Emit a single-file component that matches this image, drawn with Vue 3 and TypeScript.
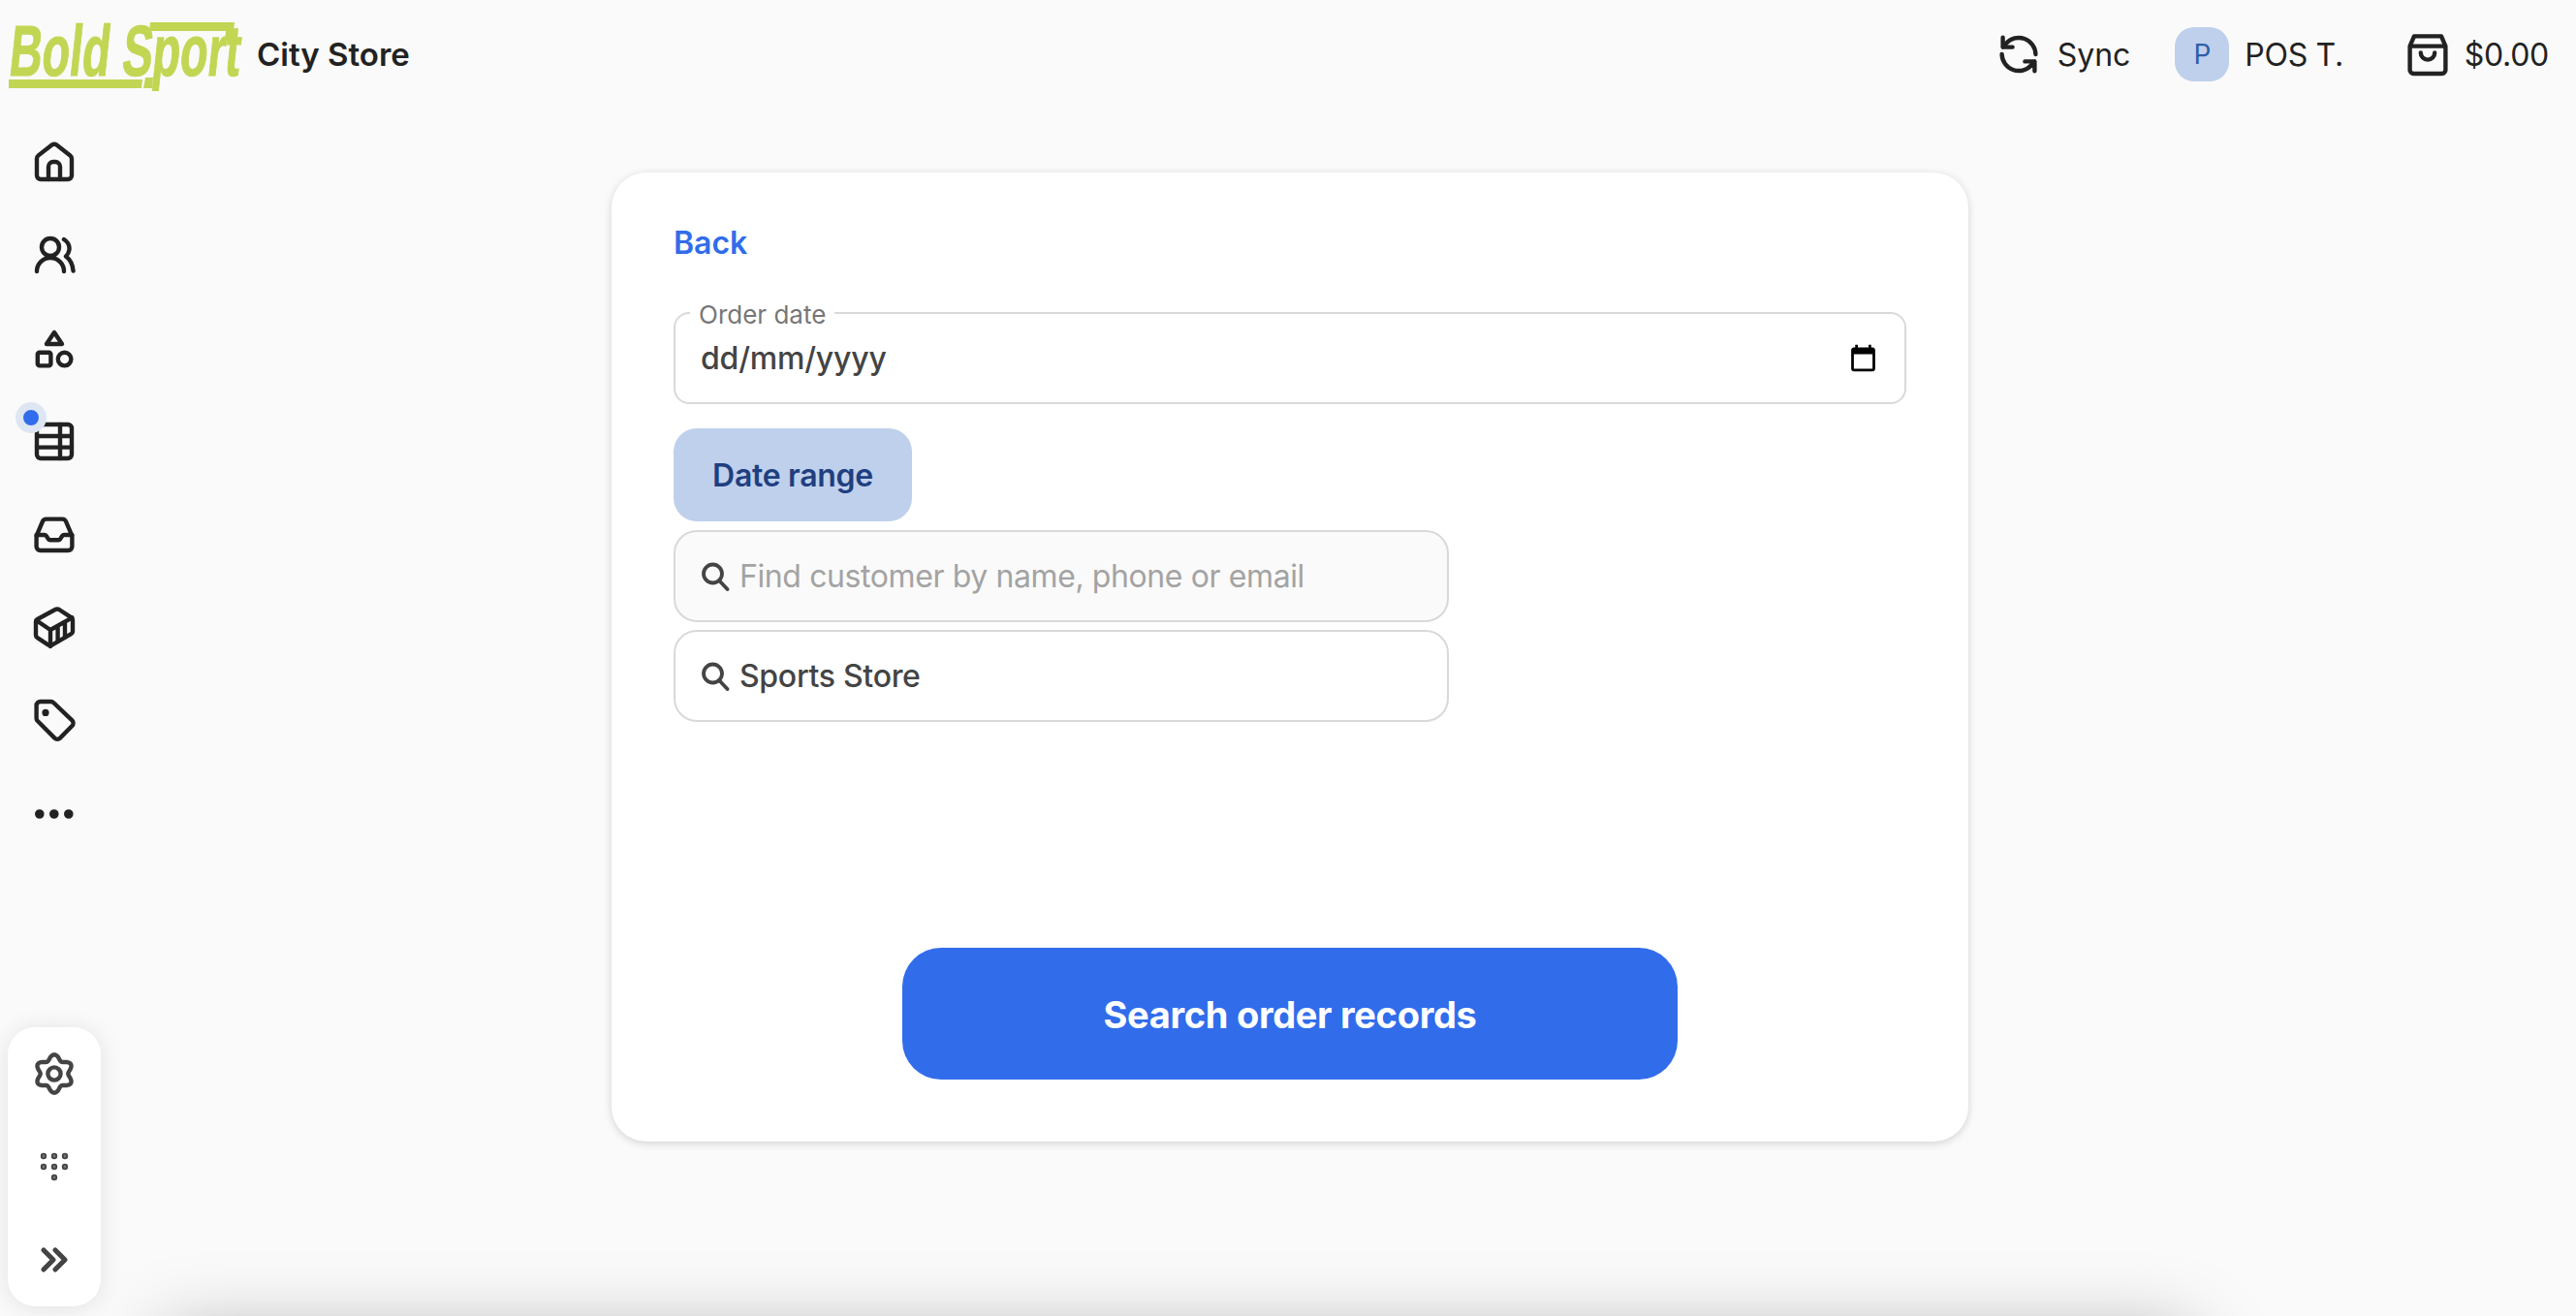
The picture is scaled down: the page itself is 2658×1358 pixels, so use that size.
<template>
  <div class="page">
    <header class="topbar">
      <div class="brand">
        <svg class="logo" viewBox="0 -10 248 92" width="248" height="92" aria-label="Bold Sport">
          <text class="logo-text" x="0" y="58" transform="translate(14 0) skewX(-6) scale(0.63 1)">Bold Sport</text>
          <path class="logo-bar" d="M155 3H242L241 12H154ZM233 12h8l-1 10h-8ZM9 62H147L146 71H9ZM150 60H158L157 71H148Z" />
        </svg>
        <span class="store-name">City Store</span>
      </div>
      <div class="actions">
        <button class="action sync" type="button">
          <svg class="icon" viewBox="0 0 24 24"><path d="M20.7 12a8.7 8.7 0 0 0-15.2-5.6L3.800 8.300M3.800 3.400v4.900h5M3.300 12a8.700 8.700 0 0 0 15.200 5.600l1.700-1.900M20.200 20.600v-4.900h-5" /></svg>
          <span>Sync</span>
        </button>
        <button class="action user" type="button">
          <span class="avatar">P</span>
          <span class="user-name">POS T.</span>
        </button>
        <button class="action cart" type="button">
          <svg class="icon" viewBox="0 0 24 24"><path d="M2.800 7.800 5 2.700h14l2.200 5.100M2.800 7.800V20a1.900 1.900 0 0 0 1.900 2h14.600a1.900 1.900 0 0 0 1.900-2V7.800ZM8.400 11.200a3.600 3.600 0 0 0 7.200 0" /></svg>
          <span class="cart-total">$0.00</span>
        </button>
      </div>
    </header>

    <div class="body">
      <aside class="sidebar">
        <nav class="nav">
          <a v-for="item in navItems" :key="item.name" class="nav-item" :title="item.name">
            <span v-if="item.badge" class="nav-badge"></span>
            <svg class="icon" viewBox="0 0 24 24" v-html="item.icon"></svg>
          </a>
        </nav>
        <div class="tools">
          <a v-for="item in toolItems" :key="item.name" class="nav-item" :title="item.name">
            <svg class="icon" viewBox="0 0 24 24" v-html="item.icon"></svg>
          </a>
        </div>
      </aside>

      <main class="main">
        <section class="card">
          <a class="back">Back</a>

          <div class="date-field">
            <span class="date-label">Order date</span>
            <span class="date-value">dd/mm/yyyy</span>
            <svg class="calendar" viewBox="0 0 24 24"><path d="M19 4h-1V2h-2v2H8V2H6v2H5c-1.100 0-2 .9-2 2v14c0 1.100.9 2 2 2h14c1.100 0 2-.9 2-2V6c0-1.100-.9-2-2-2zm0 16H5V9h14v11z" /></svg>
          </div>

          <button class="range-btn" type="button">Date range</button>

          <label class="search search--muted">
            <svg class="search-icon" viewBox="0 0 30 30"><circle cx="12.500" cy="12" r="9.500" /><path d="m19.500 19.500 8 8.500" /></svg>
            <input type="text" placeholder="Find customer by name, phone or email" />
          </label>
          <label class="search">
            <svg class="search-icon" viewBox="0 0 30 30"><circle cx="12.500" cy="12" r="9.500" /><path d="m19.500 19.500 8 8.500" /></svg>
            <input type="text" value="Sports Store" />
          </label>

          <button class="submit" type="button">Search order records</button>
        </section>
      </main>
    </div>

    <div class="bottom-sheet"></div>
  </div>
</template>

<script setup lang="ts">
// gear outline, six rounded lobes with one pointing straight up
function gearPath(): string {
  const pts: string[] = [];
  for (let i = 0; i < 120; i++) {
    const a = (i / 120) * Math.PI * 2;
    const r = 8.5 + 1.35 * Math.cos(6 * a);
    const x = 12 + r * Math.sin(a);
    const y = 12 - r * Math.cos(a);
    pts.push(`${x.toFixed(2)} ${y.toFixed(2)}`);
  }
  return `M${pts.join("L")}Z`;
}

const navItems = [
  {
    name: "Home",
    icon: '<path d="M3 10.400c0-.7.3-1.300.8-1.700l7-5.400a2 2 0 0 1 2.400 0l7 5.400c.5.4.8 1 .8 1.700V19a2 2 0 0 1-2 2H5a2 2 0 0 1-2-2Z"/><path d="M9 21v-6.500a2.500 2.500 0 0 1 2.500-2.500h1a2.500 2.500 0 0 1 2.500 2.500V21"/>',
  },
  {
    name: "Customers",
    icon: '<circle cx="10" cy="8" r="4.500"/><path d="M3 20.500a7 7 0 0 1 14 0M17 4c2 1.300 3 3.300 2.700 5.500-.2 1.300-.9 2.500-1.700 3.300 2 1.500 3.500 4.300 3.800 7.500"/>',
  },
  {
    name: "Products",
    icon: '<path d="M12 4 16 10H8Z"/><rect x="3.400" y="14.400" width="6.800" height="6.800" rx="1"/><circle cx="17.300" cy="17.800" r="3.400"/>',
  },
  {
    name: "Orders",
    badge: true,
    icon: '<rect x="3" y="3.500" width="18" height="17.500" rx="2"/><path d="M3 9.500h18M3 15.300h18M15 3.500V21"/>',
  },
  {
    name: "Inbox",
    icon: '<path d="M2.800 13v5.500a2 2 0 0 0 2 2h14.400a2 2 0 0 0 2-2V13L18 5.500a2 2 0 0 0-1.800-1.200H7.800A2 2 0 0 0 6 5.500Z"/><path d="M2.800 12.500H7a1 1 0 0 1 .8.4l1.200 1.800a1 1 0 0 0 .8.4h4.400a1 1 0 0 0 .8-.4l1.200-1.800a1 1 0 0 1 .8-.4h4.200"/>',
  },
  {
    name: "Inventory",
    icon: '<path d="M12.500 3 3.300 8a1.500 1.500 0 0 0-.8 1.300v6.900c0 .6.300 1.100.8 1.400l5.700 3.700c.6.300 1.200.3 1.800 0l9.900-5.700c.5-.3.800-.8.800-1.400V8.500c0-.6-.3-1.100-.8-1.400L14.500 3a2 2 0 0 0-2 0Z"/><path d="M2.800 8.600 10 13.500 21.200 7.200M10 13.500V22M13.800 11.500v8M17.500 9.300v8"/>',
  },
  {
    name: "Promotions",
    icon: '<path d="M2.800 4.500a2 2 0 0 1 2-2h5.500c.5 0 1 .2 1.400.6l9.500 9.100a2 2 0 0 1 0 2.800L15 21.300a2 2 0 0 1-2.800 0l-8.800-8.800a2 2 0 0 1-.6-1.400Z"/><circle class="solid" cx="7.500" cy="8.200" r=".7"/>',
  },
  {
    name: "More",
    icon: '<circle class="solid" cx="4.400" cy="12.500" r="1.300"/><circle class="solid" cx="11.900" cy="12.500" r="1.300"/><circle class="solid" cx="19.400" cy="12.500" r="1.300"/>',
  },
];

const toolItems = [
  {
    name: "Settings",
    icon: `<path d="${gearPath()}"/><circle cx="12" cy="12" r="3.300"/>`,
  },
  {
    name: "Keypad",
    icon: '<circle class="solid" cx="6.500" cy="6.500" r=".5"/><circle class="solid" cx="12" cy="6.500" r=".5"/><circle class="solid" cx="17.500" cy="6.500" r=".5"/><circle class="solid" cx="6.500" cy="12" r=".5"/><circle class="solid" cx="12" cy="12" r=".5"/><circle class="solid" cx="17.500" cy="12" r=".5"/><circle class="solid" cx="12" cy="17.500" r=".5"/>',
  },
  {
    name: "Expand",
    icon: '<path stroke-width="2.600" d="m6.500 7 5 5-5 5M12.500 7l5 5-5 5"/>',
  },
];
</script>

<style>
html,
body {
  margin: 0;
  background: #fafafa;
}
</style>

<style scoped>
.page {
  position: relative;
  display: flex;
  flex-direction: column;
  height: 100vh;
  overflow: hidden;
  background: #fafafa;
  color: #222;
  font-family: Inter, "Liberation Sans", sans-serif;
}

.topbar {
  display: flex;
  align-items: center;
  justify-content: space-between;
  flex: none;
  height: 112px;
  padding-right: 28px;
}
.brand {
  display: flex;
  align-items: center;
}
.logo {
  flex: none;
  overflow: visible;
}
.logo-text {
  fill: #c2d654;
  stroke: #c2d654;
  stroke-width: 1.2px;
  font-family: "Liberation Sans", Arial, sans-serif;
  font-size: 74px;
  font-weight: 700;
}
.logo-bar {
  fill: #c2d654;
}
.store-name {
  margin-left: 17px;
  font-size: 33px;
  font-weight: 600;
}

.actions {
  display: flex;
  align-items: center;
}
.action {
  display: flex;
  align-items: center;
  padding: 0;
  border: 0;
  background: none;
  color: inherit;
  font: inherit;
  font-size: 32px;
}
.sync {
  gap: 16px;
  margin-right: 46px;
}
.user {
  gap: 16px;
  margin-right: 63px;
}
.cart {
  gap: 14px;
}
.user-name {
  letter-spacing: -0.3px;
}
.cart-total {
  letter-spacing: -0.3px;
}
.avatar {
  display: flex;
  align-items: center;
  justify-content: center;
  width: 56px;
  height: 56px;
  border-radius: 20px;
  background: #bfd0ec;
  color: #2f5da8;
  font-size: 28px;
}

.icon {
  display: block;
  flex: none;
  width: 48px;
  height: 48px;
  fill: none;
  stroke: currentColor;
  stroke-width: 2.2;
  stroke-linecap: round;
  stroke-linejoin: round;
}
.icon :deep(.solid) {
  fill: currentColor;
}

.body {
  display: flex;
  flex: 1;
  min-height: 0;
}
.sidebar {
  display: flex;
  flex-direction: column;
  justify-content: space-between;
  flex: none;
  box-sizing: border-box;
  width: 112px;
  padding: 7px 8px 10px;
}
.nav-item {
  position: relative;
  display: flex;
  align-items: center;
  justify-content: center;
  width: 96px;
  height: 96px;
}
.nav-badge {
  position: absolute;
  top: 8px;
  left: 8px;
  width: 16px;
  height: 16px;
  border: 8px solid #dfe6f3;
  border-radius: 50%;
  background: #316ceb;
}
.tools {
  overflow: hidden;
  border-radius: 28px;
  background: #fff;
  box-shadow: 0 2px 24px rgba(0, 0, 0, 0.1);
  color: #444;
}

.main {
  flex: 1;
  display: flex;
  justify-content: center;
  padding: 66px 108px 0 0;
}
.card {
  display: flex;
  flex-direction: column;
  align-items: flex-start;
  box-sizing: border-box;
  width: 1400px;
  height: 1000px;
  padding: 53px 64px 64px;
  border-radius: 36px;
  background: #fff;
  box-shadow: 0 2px 8px rgba(0, 0, 0, 0.16);
}
.back {
  margin-bottom: 51px;
  color: #316ceb;
  font-size: 32px;
  font-weight: 600;
  line-height: 40px;
}

.date-field {
  position: relative;
  display: flex;
  align-items: center;
  justify-content: space-between;
  box-sizing: border-box;
  width: 100%;
  height: 95px;
  padding: 0 26px;
  border: 2px solid #d9d9d9;
  border-radius: 16px;
  color: #444;
  font-size: 32px;
  font-weight: 500;
}
.date-value {
  letter-spacing: -0.2px;
}
.date-label {
  position: absolute;
  top: -15px;
  left: 15px;
  padding: 0 9px;
  background: #fff;
  color: #777;
  font-size: 26px;
  font-weight: 400;
  line-height: 32px;
}
.calendar {
  width: 33px;
  height: 33px;
  fill: #000;
}

.range-btn {
  width: 246px;
  height: 96px;
  margin: 25px 0 9px;
  padding: 0;
  border: 0;
  border-radius: 24px;
  background: #bfd0ec;
  color: #1f3f80;
  font: inherit;
  font-size: 32px;
  font-weight: 600;
  letter-spacing: -0.3px;
}

.search {
  display: flex;
  align-items: center;
  gap: 10px;
  box-sizing: border-box;
  width: 800px;
  height: 95px;
  margin-bottom: 8px;
  padding: 0 26px;
  border: 2px solid #d9d9d9;
  border-radius: 24px;
  color: #444;
}
.search--muted {
  background: #fafafa;
}
.search-icon {
  flex: none;
  width: 30px;
  height: 30px;
  fill: none;
  stroke: currentColor;
  stroke-width: 3.8;
  stroke-linecap: round;
}
.search input {
  flex: 1;
  min-width: 0;
  padding: 0;
  border: 0;
  outline: 0;
  background: none;
  color: #444;
  font: inherit;
  font-size: 32px;
  font-weight: 500;
  letter-spacing: -0.3px;
}
.search input::placeholder {
  color: #a3a3a3;
  opacity: 1;
  font-weight: 400;
  letter-spacing: -0.4px;
}

.submit {
  align-self: center;
  width: 800px;
  height: 136px;
  margin-top: auto;
  padding: 2px 0 0;
  border: 0;
  border-radius: 40px;
  background: #316ceb;
  color: #fff;
  font: inherit;
  font-size: 38px;
  font-weight: 700;
  letter-spacing: -0.3px;
}

/* sheet parked below the viewport, only its shadow shows */
.bottom-sheet {
  position: absolute;
  top: 1380px;
  left: 170px;
  width: 2090px;
  height: 200px;
  box-shadow: 0 0 80px rgba(0, 0, 0, 0.35);
}
</style>
